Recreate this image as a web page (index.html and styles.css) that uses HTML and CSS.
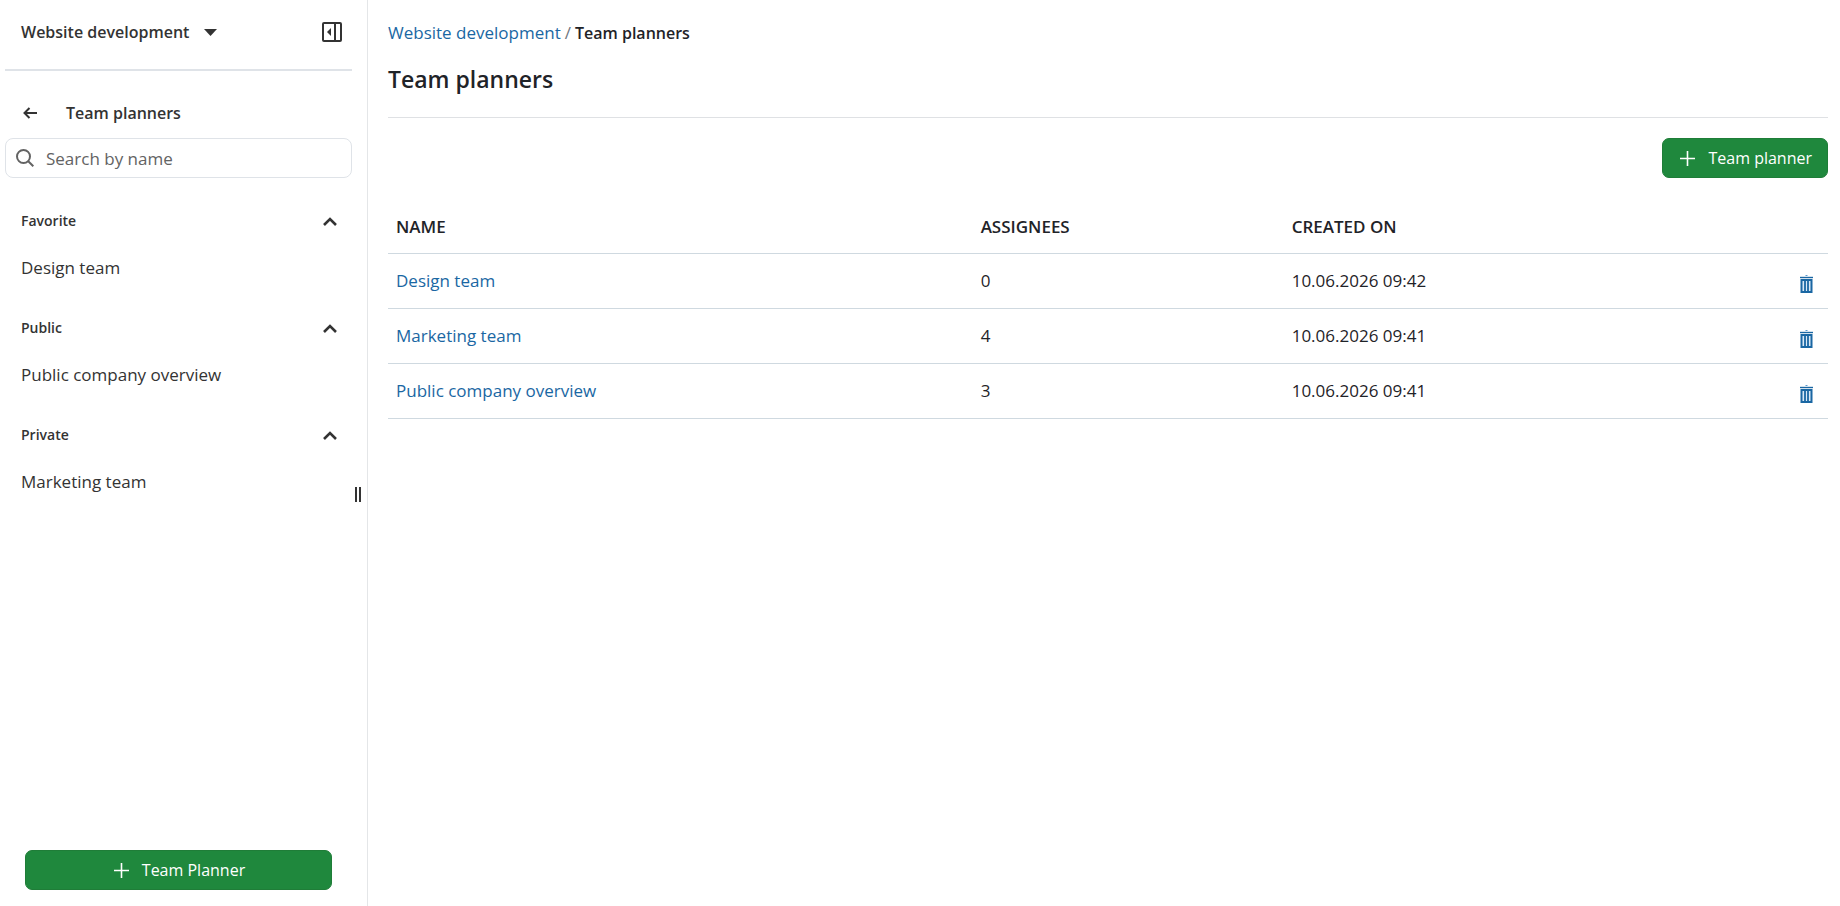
FILE: index.html
```html
<!DOCTYPE html>
<html lang="en">
<head>
    <meta charset="UTF-8">
    <meta name="viewport" content="width=device-width, initial-scale=1.0">
    <title>Team planners | Website development</title>
    <link rel="stylesheet" href="styles.css">
</head>
<body>
    <div class="layout">
        <!-- Sidebar -->
        <aside class="sidebar">
            <div class="project-bar">
                <button class="project-select" type="button">
                    Website development
                    <svg width="13" height="7" viewBox="0 0 13 7"><path d="M0 0h13L6.5 7z" fill="currentColor"/></svg>
                </button>
                <button class="icon-btn" type="button" aria-label="Collapse sidebar">
                    <svg width="20" height="20" viewBox="0 0 20 20">
                        <rect x="1" y="1" width="18" height="18" rx="1" fill="none" stroke="currentColor" stroke-width="2"/>
                        <path d="M13 1v18" stroke="currentColor" stroke-width="2"/>
                        <path d="M9 6v8l-4-4z" fill="currentColor"/>
                    </svg>
                </button>
            </div>

            <div class="menu-title">
                <a class="back" href="#" aria-label="Up">
                    <svg width="14" height="12" viewBox="0 0 14 12"><path d="M6.5 1L1.5 6l5 5M1.5 6H14" fill="none" stroke="currentColor" stroke-width="2"/></svg>
                </a>
                <span>Team planners</span>
            </div>

            <label class="search">
                <svg width="18" height="18" viewBox="0 0 18 18" fill="none" stroke="currentColor" stroke-width="2"><circle cx="7.5" cy="7.5" r="6.5"/><path d="M12 12l5.3 5.3"/></svg>
                <input type="text" placeholder="Search by name" aria-label="Search by name">
            </label>

            <nav class="groups">
                <section class="group">
                    <button class="group-head" type="button">Favorite
                        <svg width="14" height="9" viewBox="0 0 14 9"><path d="M1 8l6-6 6 6" fill="none" stroke="currentColor" stroke-width="2.6"/></svg>
                    </button>
                    <a class="group-item" href="#">Design team</a>
                </section>
                <section class="group">
                    <button class="group-head" type="button">Public
                        <svg width="14" height="9" viewBox="0 0 14 9"><path d="M1 8l6-6 6 6" fill="none" stroke="currentColor" stroke-width="2.6"/></svg>
                    </button>
                    <a class="group-item" href="#">Public company overview</a>
                </section>
                <section class="group">
                    <button class="group-head" type="button">Private
                        <svg width="14" height="9" viewBox="0 0 14 9"><path d="M1 8l6-6 6 6" fill="none" stroke="currentColor" stroke-width="2.6"/></svg>
                    </button>
                    <a class="group-item" href="#">Marketing team</a>
                </section>
            </nav>

            <button class="btn btn-wide" type="button">
                <svg width="15" height="15" viewBox="0 0 15 15"><path d="M7.5 0v15M0 7.5h15" stroke="currentColor" stroke-width="1.6"/></svg>
                Team Planner
            </button>

            <div class="resizer"></div>
        </aside>

        <!-- Content -->
        <main class="content">
            <nav class="breadcrumb" aria-label="Breadcrumb">
                <a href="#">Website development</a>
                <span class="slash">/</span>
                <span class="current">Team planners</span>
            </nav>
            <h1>Team planners</h1>

            <div class="toolbar">
                <button class="btn" type="button">
                    <svg width="15" height="15" viewBox="0 0 15 15"><path d="M7.5 0v15M0 7.5h15" stroke="currentColor" stroke-width="1.6"/></svg>
                    Team planner
                </button>
            </div>

            <table class="planners">
                <thead>
                    <tr>
                        <th class="col-name">Name</th>
                        <th class="col-assignees">Assignees</th>
                        <th>Created on</th>
                        <th class="col-actions"></th>
                    </tr>
                </thead>
                <tbody>
                    <tr>
                        <td><a href="#">Design team</a></td>
                        <td>0</td>
                        <td>10.06.2026 09:42</td>
                        <td class="actions">
                            <a class="delete" href="#" aria-label="Delete">
                                <svg width="13" height="19" viewBox="0 0 13 19"><path d="M5.5.5h2" stroke="#5b9bd0"/><path d="M0 2.5h13" stroke="#1a67a3" stroke-width="1.4"/><path d="M1.5 5h10v12h-10z" fill="#d9e9f6" stroke="#1a67a3" stroke-width="2"/><path d="M5 5v12M8 5v12" stroke="#1a67a3" stroke-width="1.8"/></svg>
                            </a>
                        </td>
                    </tr>
                    <tr>
                        <td><a href="#">Marketing team</a></td>
                        <td>4</td>
                        <td>10.06.2026 09:41</td>
                        <td class="actions">
                            <a class="delete" href="#" aria-label="Delete">
                                <svg width="13" height="19" viewBox="0 0 13 19"><path d="M5.5.5h2" stroke="#5b9bd0"/><path d="M0 2.5h13" stroke="#1a67a3" stroke-width="1.4"/><path d="M1.5 5h10v12h-10z" fill="#d9e9f6" stroke="#1a67a3" stroke-width="2"/><path d="M5 5v12M8 5v12" stroke="#1a67a3" stroke-width="1.8"/></svg>
                            </a>
                        </td>
                    </tr>
                    <tr>
                        <td><a href="#">Public company overview</a></td>
                        <td>3</td>
                        <td>10.06.2026 09:41</td>
                        <td class="actions">
                            <a class="delete" href="#" aria-label="Delete">
                                <svg width="13" height="19" viewBox="0 0 13 19"><path d="M5.5.5h2" stroke="#5b9bd0"/><path d="M0 2.5h13" stroke="#1a67a3" stroke-width="1.4"/><path d="M1.5 5h10v12h-10z" fill="#d9e9f6" stroke="#1a67a3" stroke-width="2"/><path d="M5 5v12M8 5v12" stroke="#1a67a3" stroke-width="1.8"/></svg>
                            </a>
                        </td>
                    </tr>
                </tbody>
            </table>
        </main>
    </div>
</body>
</html>
```
FILE: styles.css
```css
/* Base Styles */
* {
    margin: 0;
    padding: 0;
    box-sizing: border-box;
}

body {
    font-family: 'Segoe UI', 'Open Sans', 'Noto Sans', sans-serif;
    font-size: 17px;
    line-height: 24px;
    color: #1f2328;
    background: #fff;
}

button,
input {
    font: inherit;
    color: inherit;
    background: none;
    border: none;
}

button {
    cursor: pointer;
}

a {
    color: #1a67a3;
    text-decoration: none;
}

svg {
    display: block;
    flex: none;
}

.layout {
    display: flex;
    min-height: 100vh;
}

/* Sidebar */
.sidebar {
    position: relative;
    display: flex;
    flex-direction: column;
    width: 368px;
    padding: 0 15px 16px 5px;
    border-right: 1px solid #e4e6e8;
    color: #333;
}

.project-bar {
    display: flex;
    align-items: center;
    justify-content: space-between;
    height: 71px;
    padding: 0 10px 5px 16px;
    border-bottom: 2px solid #dfe3e8;
}

.project-select {
    display: flex;
    align-items: center;
    gap: 15px;
    font-size: 16px;
    font-weight: 600;
}

.menu-title {
    display: flex;
    align-items: center;
    gap: 29px;
    padding: 30px 18px 13px;
    font-size: 16px;
    font-weight: 600;
}

.back {
    color: #333;
}

.search {
    display: flex;
    align-items: center;
    gap: 12px;
    height: 40px;
    padding: 0 10px;
    border: 1px solid #dfe3e8;
    border-radius: 8px;
    color: #636363;
}

.search input {
    flex: 1;
    min-width: 0;
    padding-top: 2px;
    outline: none;
}

.search input::placeholder {
    color: #636363;
    opacity: 1;
}

.groups {
    flex: 1;
    padding-top: 23px;
}

.group {
    padding-bottom: 28px;
}

.group-head {
    display: flex;
    align-items: center;
    justify-content: space-between;
    width: 100%;
    height: 40px;
    padding: 0 15px 0 16px;
    font-size: 14px;
    font-weight: 600;
}

.group-item {
    display: block;
    padding: 15px 16px 0;
    color: #333;
}

.resizer {
    position: absolute;
    right: 6px;
    top: 487px;
    width: 6px;
    height: 15px;
    border: solid #333;
    border-width: 0 2px;
    cursor: col-resize;
}

/* Buttons */
.btn {
    display: flex;
    align-items: center;
    justify-content: center;
    gap: 13px;
    height: 40px;
    padding: 0 15px 0 17px;
    border: 1px solid #1f7d38;
    border-radius: 7px;
    background: #1f883d;
    color: #fff;
    font-size: 16px;
}

.btn-wide {
    margin: 0 20px;
}

/* Content */
.content {
    flex: 1;
    min-width: 0;
    padding: 21px 12px 0 20px;
}

.breadcrumb {
    display: flex;
    gap: 4px;
}

.slash {
    color: #6e7781;
}

.current {
    font-size: 16px;
    font-weight: 600;
}

h1 {
    padding: 18px 0 21px;
    border-bottom: 1px solid #dfe1e4;
    font-size: 23px;
    line-height: 33px;
    font-weight: 600;
}

.toolbar {
    display: flex;
    justify-content: flex-end;
    padding: 20px 0 22px;
}

/* Planner table */
.planners {
    width: 100%;
    table-layout: fixed;
    border-collapse: separate;
    border-spacing: 0;
}

.planners th,
.planners td {
    height: 55px;
    padding: 0 8px;
    border-bottom: 1px solid #cfd9e0;
    text-align: left;
}

.planners th {
    height: 54px;
    font-weight: 600;
    text-transform: uppercase;
}

.col-name {
    width: 40.6%;
}

.col-assignees {
    width: 21.6%;
}

.col-actions {
    width: 60px;
}

.planners .actions {
    padding: 6px 15px 0 0;
}

.delete {
    display: flex;
    justify-content: flex-end;
}
```
